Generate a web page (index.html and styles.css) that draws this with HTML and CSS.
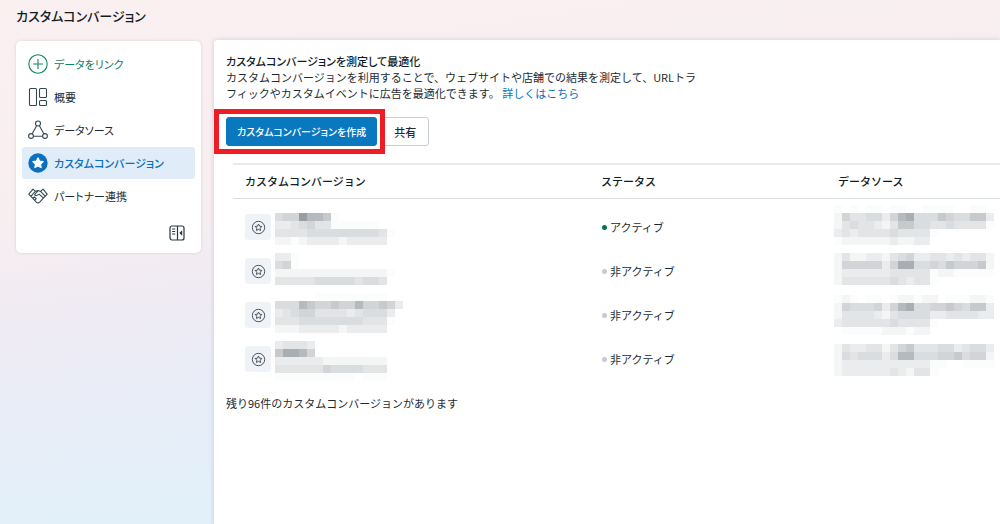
FILE: index.html
```html
<!DOCTYPE html>
<html lang="ja">
<head>
<meta charset="utf-8">
<title>カスタムコンバージョン</title>
<link rel="stylesheet" href="styles.css">
</head>
<body>
<svg class="defs" aria-hidden="true">
  <symbol id="badge" viewBox="0 0 16 16">
    <circle cx="8" cy="8" r="6.6" fill="none" stroke="#3f4c59"/>
    <path d="M8 4.3l1.1 2.3 2.5.3-1.8 1.8.4 2.5L8 10l-2.2 1.2.4-2.5-1.8-1.8 2.5-.3z" fill="none" stroke="#3f4c59" stroke-linejoin="round"/>
  </symbol>
</svg>
<header class="page-head"><h1 class="page-title">カスタムコンバージョン</h1></header>
<div class="layout">
  <nav class="sidebar">
    <ul class="menu">
      <li><a class="item item-link" href="#">
        <svg class="icon" viewBox="0 0 20 20"><circle cx="10" cy="10" r="9.2"/><path d="M10 5v10M5 10h10"/></svg>データをリンク</a></li>
      <li><a class="item" href="#">
        <svg class="icon" viewBox="0 0 20 20"><rect x="1.5" y="1.5" width="7" height="17" rx="1"/><rect x="11.5" y="1.5" width="7" height="9" rx="1"/><rect x="11.5" y="13.5" width="7" height="5" rx="1"/></svg>概要</a></li>
      <li><a class="item" href="#">
        <svg class="icon" viewBox="0 0 20 20"><circle cx="10" cy="3.5" r="2.5"/><circle cx="3" cy="16" r="2.4"/><circle cx="17" cy="16" r="2.4"/><path d="M8.6 5.7L4.2 13.8M11.4 5.7l4.4 8.1M5.5 16.3h9"/></svg>データソース</a></li>
      <li><a class="item item-active" href="#" aria-current="page">
        <svg class="icon" viewBox="0 0 20 20"><circle class="solid" cx="10" cy="10" r="9.7"/><path class="star" d="M10 4.8l1.6 3.2 3.6.5-2.6 2.5.6 3.6-3.2-1.7-3.2 1.7.6-3.6-2.6-2.5 3.6-.5z"/></svg>カスタムコンバージョン</a></li>
      <li><a class="item" href="#">
        <svg class="icon" viewBox="0 0 20 20"><path d="M5 3.2L.8 8.2l2 2.1 4.6-5zM15 3.2l4.2 5-2 2.1-4.6-5zM7.2 5.6L10 4.6l2.8 1M3 10.4l5.3 5.7q1.7 1.6 3.4 0l5.3-5.7M10 4.8L6.7 8.5q.8 1.8 2.8.6l1.6-1 4.7 4.2M5 12.3l1.4-1.4 1.8 1.8-1.3 1.5"/></svg>パートナー連携</a></li>
    </ul>
    <button class="collapse" type="button" aria-label="メニューを折りたたむ">
      <svg class="collapse-icon" viewBox="0 0 16 16"><rect x="1" y="1" width="14" height="14" rx="2"/><path d="M8.5 1v14M3.2 4h3M3.2 6.5h3M3.2 9h3"/><path class="arrow" d="M13.2 5.3v5.4L10.3 8z"/></svg>
    </button>
  </nav>
  <main class="panel">
    <h2 class="panel-title">カスタムコンバージョンを測定して最適化</h2>
    <p class="text">カスタムコンバージョンを利用することで、ウェブサイトや店舗での結果を測定して、URLトラフィックやカスタムイベントに広告を最適化できます。 <a class="link" href="#">詳しくはこちら</a></p>
    <div class="actions">
      <div class="marked"><button class="btn btn-primary" type="button">カスタムコンバージョンを作成</button></div>
      <button class="btn" type="button">共有</button>
    </div>
    <table class="table">
      <thead><tr><th class="col-name" scope="col">カスタムコンバージョン</th><th class="col-status" scope="col">ステータス</th><th scope="col">データソース</th></tr></thead>
      <tbody>
        <tr><td><div class="name"><span class="tile"><svg class="tile-icon"><use href="#badge"/></svg></span><svg class="mosaic" data-mosaic="name0"></svg></div></td><td><span class="status status-on">アクティブ</span></td><td class="source"><svg class="mosaic" data-mosaic="source0"></svg></td></tr>
        <tr><td><div class="name"><span class="tile"><svg class="tile-icon"><use href="#badge"/></svg></span><svg class="mosaic" data-mosaic="name1"></svg></div></td><td><span class="status">非アクティブ</span></td><td class="source"><svg class="mosaic" data-mosaic="source1"></svg></td></tr>
        <tr><td><div class="name"><span class="tile"><svg class="tile-icon"><use href="#badge"/></svg></span><svg class="mosaic" data-mosaic="name2"></svg></div></td><td><span class="status">非アクティブ</span></td><td class="source"><svg class="mosaic" data-mosaic="source2"></svg></td></tr>
        <tr><td><div class="name"><span class="tile"><svg class="tile-icon"><use href="#badge"/></svg></span><svg class="mosaic" data-mosaic="name3"></svg></div></td><td><span class="status">非アクティブ</span></td><td class="source"><svg class="mosaic" data-mosaic="source3"></svg></td></tr>
      </tbody>
    </table>
    <p class="text remain">残り96件のカスタムコンバージョンがあります</p>
  </main>
</div>
<script src="mosaic.js"></script>
</body>
</html>
```
FILE: styles.css
```css
* { box-sizing: border-box; }
body {
  margin: 0;
  min-height: 100vh;
  display: flex;
  flex-direction: column;
  font-family: "Noto Sans CJK JP", sans-serif;
  font-size: 11px;
  line-height: 16px;
  color: #1c2b33;
  background: linear-gradient(172deg, #fbf0f0 0%, #f7eef0 34%, #efebf4 50%, #e8edf7 64%, #e2f0fa 80%);
  overflow-x: hidden;
}
h1, h2, p, ul { margin: 0; padding: 0; }
a { text-decoration: none; }
.defs { position: absolute; width: 0; height: 0; }
.page-head { padding: 6px 16px 14px; }
.page-title { font-size: 13px; line-height: 20px; font-weight: 500; font-feature-settings: "palt"; color: #111c24; }
.layout { flex: 1; display: flex; gap: 13px; padding-left: 16px; }
.sidebar {
  flex: none;
  align-self: flex-start;
  display: flex;
  flex-direction: column;
  width: 185px;
  margin-top: 1px;
  padding: 7px 6px 12px;
  background: #fff;
  border-radius: 5px;
  box-shadow: 0 0 3px rgba(70, 50, 80, 0.18);
}
.menu { list-style: none; display: grid; gap: 1px; }
.item {
  display: flex;
  align-items: center;
  gap: 6px;
  height: 32px;
  padding: 0 6px;
  border-radius: 3px;
  font-size: 11px;
  font-feature-settings: "palt";
  color: #1c2b33;
}
.icon { width: 20px; height: 20px; fill: none; stroke: #344854; stroke-width: 1.1; stroke-linejoin: round; }
.item-link { color: #0f8060; }
.item-link .icon { stroke: #0f8a65; }
.item-active { background: #e0ecf7; color: #0a6fc0; font-weight: 500; }
.item-active .solid { fill: #0a6fc0; stroke: none; }
.item-active .star { fill: #fff; stroke: #fff; }
.collapse { align-self: flex-end; margin: 13px 10px 0 0; padding: 0; width: 16px; height: 16px; border: 0; background: none; }
.collapse-icon { display: block; width: 16px; height: 16px; fill: none; stroke: #263640; stroke-width: 1.2; }
.arrow { fill: #263640; stroke: none; }
.panel {
  flex: 1;
  min-width: 0;
  padding: 13px 0 0 12px;
  background: #fff;
  border-radius: 4px 0 0 0;
  box-shadow: 0 0 5px rgba(70, 60, 110, 0.2);
}
.panel-title { font-size: 11px; line-height: 16px; font-weight: 500; font-feature-settings: "palt"; color: #111c24; }
.text { max-width: 480px; }
.link { color: #0a6fc0; }
.actions { display: flex; gap: 4px; margin-top: 16px; }
.btn {
  height: 29px;
  padding: 0 12px;
  border: 1px solid #c5cdd5;
  border-radius: 3px;
  background: #fff;
  font: 500 11px/16px "Noto Sans CJK JP", sans-serif;
  color: #1c2b33;
}
.btn-primary { padding: 0 10px; border-color: #0a78be; background: #0a78be; color: #fff; font-size: 10px; font-feature-settings: "palt"; }
.marked { position: relative; }
.marked::after { content: ""; position: absolute; inset: -8px -8px -8px -12px; border: 5px solid #ee1c24; pointer-events: none; }
.table { width: calc(100% - 7px); margin: 17px 0 0 7px; border-collapse: collapse; table-layout: fixed; }
.table th { height: 34px; padding: 0 12px; border-top: 2px solid #e8eaec; border-bottom: 1px solid #dbe0e3; text-align: left; font-weight: 500; color: #111c24; }
.col-name { width: 356px; }
.col-status { width: 237px; }
.table tbody::before { content: ""; display: table-row; height: 7px; }
.table td { height: 44px; padding: 0 12px; }
.table .source { padding: 0 0 0 8px; }
.name { display: flex; align-items: center; gap: 4px; }
.tile { display: grid; place-items: center; width: 26px; height: 26px; border-radius: 3px; background: #eff3f7; }
.tile-icon { width: 15px; height: 15px; }
.mosaic { display: block; width: 164px; height: 44px; }
.status { display: flex; align-items: center; gap: 3px; }
.status::before { content: ""; width: 5px; height: 5px; margin-left: 1px; border-radius: 50%; background: #c3cbd4; }
.status-on::before { background: #067647; }
.remain { margin-top: 14px; }
```
FILE: mosaic.js
```js
// Each digit or letter is the darkness of one 8px cell; a dot is an empty cell.
const SHADES = {
  '1': '#fbfcfc', '2': '#f4f5f5', '3': '#ebecee', '4': '#e2e4e6', '5': '#dadddf',
  '6': '#d2d4d8', '7': '#c6cacd', '8': '#b4bbbf', '9': '#a8aeb2', 'a': '#999da1'
};
const MOSAICS = {
  name0: { top: 8, rows: ['566a8871', '3345644111111', '444455555555541', '22123333233333'] },
  name1: { top: 4, rows: ['331', '561', '222222222222221', '44444555554554'] },
  name2: { top: 0, rows: ['.....111111111', '5558766766866763', '345664444345553', '444555555554441', '22233333233333'] },
  name3: { top: 4, rows: ['34443', '79986', '33333322222222', '44444465555444', '1111111111.111'] },
  source0: { top: 0, rows: ['1.1.11.11..1111..11', '26445536895557655773', '24544324775544544441', '3434444544441', '122222232233'] },
  source1: { top: 4, rows: ['24223324563344343442', '26666636995565766672', '23333334444412211111', '2444444543441'] },
  source2: { top: 2, rows: ['121.11.122122.111221', '26555636895566765773', '24444324555533444433', '3444444544441', '.11111222122'] },
  source3: { top: 7, rows: ['24334424674445534553', '25455535885556675662', '23333333333311..1111', '2333333432441'] }
};
const CELL = 8;
document.querySelectorAll('[data-mosaic]').forEach(svg => {
  const { top, rows } = MOSAICS[svg.dataset.mosaic];
  rows.forEach((row, y) => [...row].forEach((key, x) => {
    if (!SHADES[key]) return;
    const rect = document.createElementNS('http://www.w3.org/2000/svg', 'rect');
    const attrs = { x: x * CELL, y: top + y * CELL, width: CELL, height: CELL, fill: SHADES[key] };
    Object.entries(attrs).forEach(([name, value]) => rect.setAttribute(name, value));
    svg.append(rect);
  }));
});
```
